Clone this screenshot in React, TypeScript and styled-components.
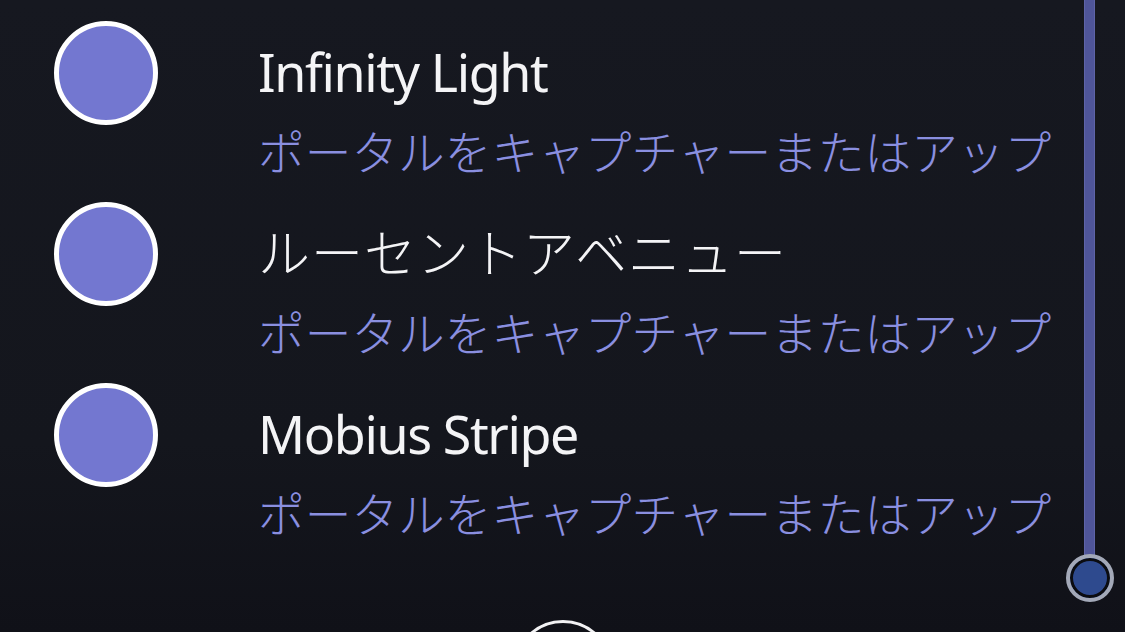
import React from "react";
import styled, { createGlobalStyle } from "styled-components";

interface Portal {
  title: string;
  subtitle: string;
}

const portals: Portal[] = [
  { title: "Infinity Light", subtitle: "ポータルをキャプチャーまたはアップ" },
  { title: "ルーセントアベニュー", subtitle: "ポータルをキャプチャーまたはアップ" },
  { title: "Mobius Stripe", subtitle: "ポータルをキャプチャーまたはアップ" },
];

const isKana = (s: string) => /[\u3040-\u30ff]/.test(s);

const GlobalStyle = createGlobalStyle`
  html, body {
    margin: 0;
    padding: 0;
    background: #14161d;
  }
  #root {
    height: 632px;
  }
`;

const Screen = styled.div`
  position: relative;
  width: 1125px;
  height: 632px;
  overflow: hidden;
  background: linear-gradient(180deg, #161820 0%, #14161d 70%, #101118 100%);
  font-family: "Noto Sans", "Noto Sans CJK JP", sans-serif;
`;

const List = styled.ul`
  list-style: none;
  margin: 0;
  padding: 21px 0 0 54px;
  display: flex;
  flex-direction: column;
`;

const Row = styled.li`
  display: flex;
  align-items: flex-start;
  gap: 100px;
  height: 181px;
`;

const Avatar = styled.div`
  flex: none;
  width: 104px;
  height: 104px;
  box-sizing: border-box;
  border-radius: 50%;
  border: 5px solid #ffffff;
  background: #7377d0;
`;

const Texts = styled.div`
  display: flex;
  flex-direction: column;
  gap: 22px;
  margin-top: 23px;
`;

const Title = styled.div<{ $kana?: boolean }>`
  font-size: 52px;
  font-weight: ${(p) => (p.$kana ? 300 : 400)};
  letter-spacing: ${(p) => (p.$kana ? "1px" : "-1.4px")};
  line-height: 56px;
  color: #f4f4f6;
  white-space: nowrap;
`;

const Subtitle = styled.div`
  font-family: "Noto Sans CJK JP", sans-serif;
  font-weight: 300;
  font-size: 46.7px;
  line-height: 56px;
  color: #8a8fe0;
  white-space: nowrap;
`;

const Track = styled.div`
  position: absolute;
  left: 1084px;
  top: 0;
  width: 11px;
  height: 560px;
  background: #4f5599;
  box-shadow: inset 1px 0 0 #5e64a8, inset -1px 0 0 #5e64a8;
`;

const Thumb = styled.div`
  position: absolute;
  left: 1066px;
  top: 554px;
  width: 48px;
  height: 48px;
  box-sizing: border-box;
  border-radius: 50%;
  border: 4px solid #a3a9b8;
  background: #2e4a8e;
  box-shadow: inset 0 0 0 3px #0b0c10;
`;

const HomeButton = styled.div`
  position: absolute;
  left: 513px;
  top: 620px;
  width: 100px;
  height: 100px;
  box-sizing: border-box;
  border-radius: 50%;
  border: 3px solid #f2f2f4;
`;

export default function App() {
  return (
    <Screen>
      <GlobalStyle />
      <List>
        {portals.map((p) => (
          <Row key={p.title}>
            <Avatar />
            <Texts>
              <Title $kana={isKana(p.title)}>{p.title}</Title>
              <Subtitle>{p.subtitle}</Subtitle>
            </Texts>
          </Row>
        ))}
      </List>
      <Track />
      <Thumb />
      <HomeButton />
    </Screen>
  );
}
